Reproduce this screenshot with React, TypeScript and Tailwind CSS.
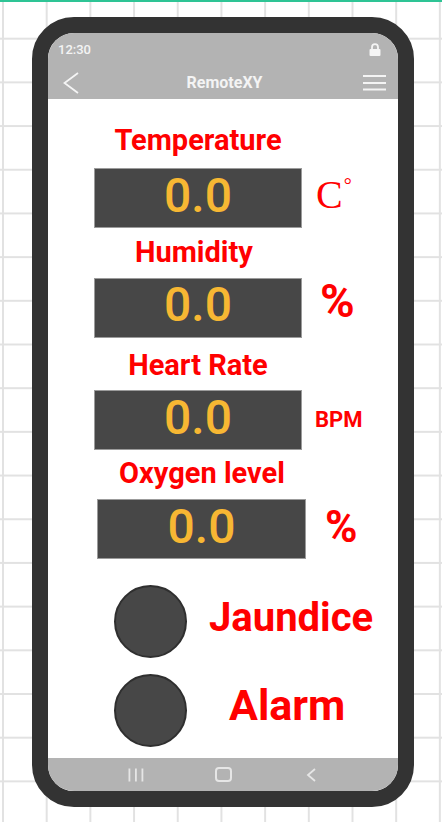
function Display({ className = "" }: { className?: string }) {
  return (
    <div
      className={`flex h-[60px] w-[208px] shrink-0 items-center justify-center border border-[#9b9b9b] bg-[#474747] pb-[5px] text-[48px] font-medium leading-none text-[#f7b733] ${className}`}
    >
      0.0
    </div>
  );
}

function Label({ children, className = "" }: { children: string; className?: string }) {
  return (
    <p className={`w-[208px] text-center text-[29px] font-bold leading-none ${className}`}>{children}</p>
  );
}

function Lamp() {
  return <div className="ml-[66px] h-[73px] w-[73px] shrink-0 rounded-full border-2 border-[#2f2f2f] bg-[#474747]" />;
}

export default function App() {
  return (
    <div className="h-[822px] w-full overflow-hidden border-t-2 border-[#2ec495] bg-white bg-[linear-gradient(to_right,#e2e2e2_2px,transparent_2px),linear-gradient(to_bottom,#e2e2e2_2px,transparent_2px)] bg-size-[43.7px_43.7px] bg-position-[2px_-8px] pl-[32px] pt-[15px] font-['Roboto',sans-serif]">
      <div className="flex h-[790px] w-[382px] flex-col overflow-hidden rounded-[42px] border-[16px] border-[#333333] bg-white">
        {/* status + title bar */}
        <header className="bg-[#b3b3b3] text-[#f4f4f4]">
          <div className="flex h-[33px] items-center justify-between pl-[10px] pr-[17px]">
            <span className="text-[13px] font-medium leading-none">12:30</span>
            <svg width="12" height="13" viewBox="0 0 12 13" aria-hidden="true">
              <path d="M3 6.5V4.2a3 3 0 0 1 6 0v2.3" fill="none" stroke="currentColor" strokeWidth="1.8" />
              <rect x="0.5" y="6" width="11" height="7" rx="1" fill="currentColor" />
            </svg>
          </div>
          <div className="grid h-[33px] grid-cols-[1fr_auto_1fr] items-center pl-[15px] pr-[12px]">
            <svg width="16" height="22" viewBox="0 0 16 22" aria-hidden="true">
              <polyline points="15,1 1.5,11 15,21" fill="none" stroke="currentColor" strokeWidth="1.8" />
            </svg>
            <span className="text-[16px] font-bold leading-none">RemoteXY</span>
            <svg className="justify-self-end" width="23" height="16" viewBox="0 0 23 16" aria-hidden="true">
              <g stroke="currentColor" strokeWidth="2">
                <line x1="0" y1="1" x2="23" y2="1" />
                <line x1="0" y1="8" x2="23" y2="8" />
                <line x1="0" y1="14.5" x2="23" y2="14.5" />
              </g>
            </svg>
          </div>
        </header>

        <main className="flex flex-1 flex-col pt-[27px] text-[#ff0000]">
          <Label className="ml-[46px]">Temperature</Label>
          <div className="mt-[13px] flex items-center">
            <Display className="ml-[46px]" />
            <div className="mb-[6px] ml-[14px] flex items-start font-['Liberation_Serif',serif] leading-none">
              <span className="text-[40px] leading-none">C</span>
              <span className="ml-[1px] text-[20px] leading-none">°</span>
            </div>
          </div>

          <Label className="ml-[42px] mt-[10px]">Humidity</Label>
          <div className="mt-[10px] flex items-center">
            <Display className="ml-[46px]" />
            <span className="mb-[14px] ml-[18px] text-[47px] font-bold leading-none">%</span>
          </div>

          <Label className="ml-[46px] mt-[13px]">Heart Rate</Label>
          <div className="mt-[10px] flex items-center">
            <Display className="ml-[46px]" />
            <span className="ml-[13px] text-[22px] font-bold leading-none">BPM</span>
          </div>

          <Label className="ml-[50px] mt-[9px]">Oxygen level</Label>
          <div className="mt-[11px] flex items-center">
            <Display className="ml-[49px] w-[209px]" />
            <span className="mb-[4px] ml-[19px] text-[44px] font-bold leading-none">%</span>
          </div>

          <div className="mt-[26px] flex items-center">
            <Lamp />
            <span className="mb-[7px] ml-[22px] text-[40px] font-bold leading-none">Jaundice</span>
          </div>
          <div className="mt-[16px] flex items-center">
            <Lamp />
            <span className="mb-[11px] ml-[42px] text-[43px] font-bold leading-none">Alarm</span>
          </div>
        </main>

        {/* system nav bar */}
        <nav className="grid h-[33px] grid-cols-3 items-center bg-[#b3b3b3] px-[43.75px] text-[#e6e6e6]">
          <svg className="justify-self-center" width="16" height="14" viewBox="0 0 16 14" aria-hidden="true">
            <rect x="0.5" y="0.5" width="1.8" height="13" fill="currentColor" />
            <rect x="7" y="0.5" width="1.8" height="13" fill="currentColor" />
            <rect x="13.5" y="0.5" width="1.8" height="13" fill="currentColor" />
          </svg>
          <svg className="justify-self-center" width="17" height="15" viewBox="0 0 17 15" aria-hidden="true">
            <rect x="1" y="1" width="15" height="13" rx="3" fill="none" stroke="currentColor" strokeWidth="2" />
          </svg>
          <svg className="justify-self-center" width="10" height="14" viewBox="0 0 10 14" aria-hidden="true">
            <polyline points="9,1 2,7 9,13" fill="none" stroke="currentColor" strokeWidth="1.8" />
          </svg>
        </nav>
      </div>
    </div>
  );
}
